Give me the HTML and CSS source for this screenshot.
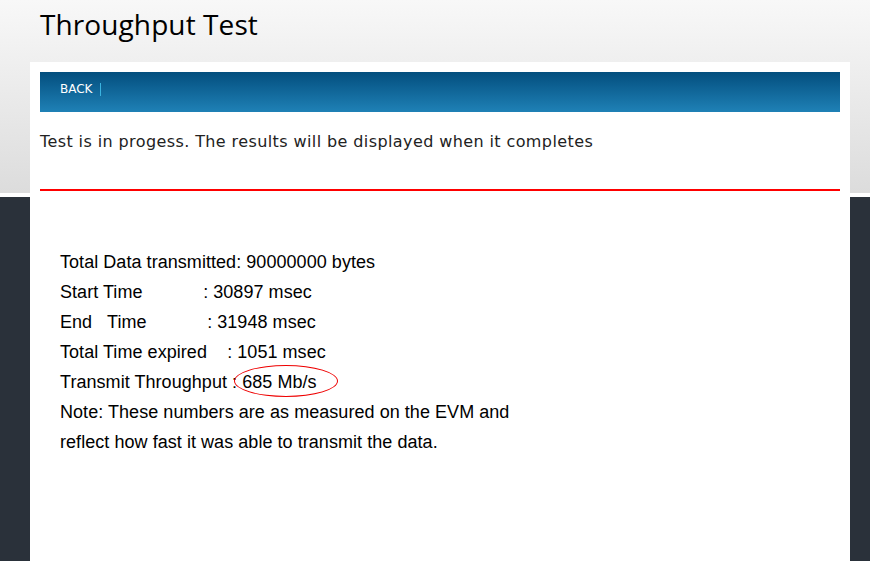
FILE: index.html
```html
<!DOCTYPE html>
<html lang="en">
<head>
  <meta charset="UTF-8">
  <meta name="viewport" content="width=device-width, initial-scale=1.0">
  <title>Throughput Test</title>
  <link rel="stylesheet" href="styles.css">
</head>
<body>
  <div class="page-header">
    <h1>Throughput Test</h1>
  </div>
  <div class="panel">
    <div class="nav-bar">
      <a href="#" class="nav-link">BACK</a>
    </div>
    <p class="status">Test is in progess. The results will be displayed when it completes</p>
    <hr class="divider">
    <div class="results">
      <div>Total Data transmitted: 90000000 bytes</div>
      <div>Start Time            : 30897 msec</div>
      <div>End   Time            : 31948 msec</div>
      <div>Total Time expired    : 1051 msec</div>
      <div>Transmit Throughput : <span class="highlight">685 Mb/s</span></div>
      <div>Note: These numbers are as measured on the EVM and</div>
      <div>reflect how fast it was able to transmit the data.</div>
    </div>
  </div>
</body>
</html>
```

FILE: styles.css
```css
html, body {
  height: 100%;
}
body {
  margin: 0;
  font-family: 'DejaVu Sans', Verdana, sans-serif;
  background: linear-gradient(to bottom, #f8f8f8 0, #dcdcdc 193px, #fff 193px, #fff 197px, #2a313a 197px);
}
.page-header {
  height: 62px;
  padding-left: 40px;
  box-sizing: border-box;
}
.page-header h1 {
  margin: 0;
  padding-top: 2px;
  font-family: 'Open Sans', sans-serif;
  font-weight: normal;
  font-size: 28px;
  letter-spacing: 0.1px;
  line-height: 44px;
  color: #000;
}
.panel {
  background: #fff;
  margin: 0 20px 0 30px;
  padding: 10px;
  min-height: 499px;
  box-sizing: border-box;
}
.nav-bar {
  height: 40px;
  background: linear-gradient(to bottom, #034e7e, #1f81b6);
  padding-left: 20px;
  display: flex;
  align-items: center;
}
.nav-link {
  color: #fff;
  text-decoration: none;
  font-size: 12px;
  padding-right: 8px;
  margin-bottom: 6px;
  border-right: 1px solid #3ab3e0;
  line-height: 13px;
}
.status {
  margin: 20px 0 0;
  font-size: 16px;
  letter-spacing: 0.4px;
  line-height: 20px;
  color: #222;
}
.divider {
  margin: 37px 0 0;
  border: none;
  height: 2px;
  background: #f00;
}
.results {
  margin-top: 56px;
  padding-left: 20px;
  font-family: 'Liberation Sans', Arial, sans-serif;
  font-size: 18px;
  letter-spacing: 0.05px;
  line-height: 30px;
  color: #000;
}
.results div {
  white-space: pre;
}
.highlight {
  position: relative;
}
.highlight::after {
  content: '';
  position: absolute;
  left: -8px;
  top: -7px;
  width: 102px;
  height: 30px;
  border: 1px solid #e00;
  border-radius: 50%;
}
```
